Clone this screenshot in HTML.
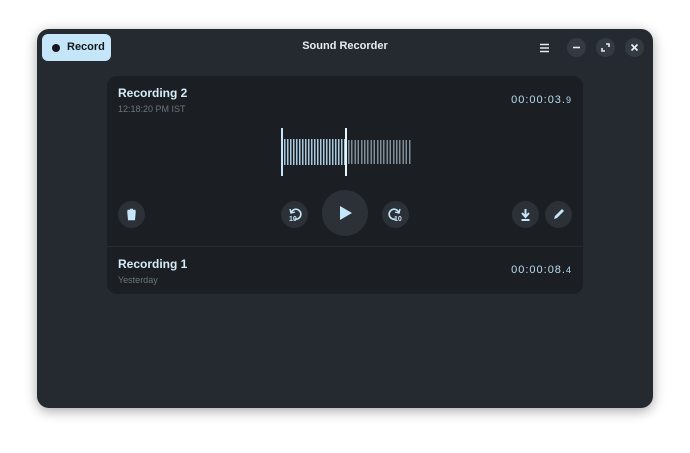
<!DOCTYPE html>
<html><head><style>
body{margin:0;width:690px;height:453px;background:#fff;position:relative;overflow:hidden;font-family:"Liberation Sans",sans-serif}
.win{position:absolute;left:37px;top:29px;width:616px;height:379px;background:#242a30;border-radius:12px;box-shadow:0 3px 12px rgba(0,0,0,.35)}
.rec{position:absolute;left:5px;top:5px;width:69px;height:27px;background:#c4e6f8;border-radius:6px;color:#15191d;font-weight:bold;font-size:11px;line-height:27px}
.rec i{position:absolute;left:10px;top:10px;width:8px;height:8px;border-radius:50%;background:#15191d}
.rec span{position:absolute;left:25px}
.title{position:absolute;left:0;width:616px;top:11px;text-align:center;color:#e6ecf0;font-weight:bold;font-size:11px}
.cb{position:absolute;top:9px;width:19px;height:19px;border-radius:50%;background:#333a41}
.card{position:absolute;left:70px;top:47px;width:476px;height:218px;background:#1b1f23;border-radius:10px}
.n{position:absolute;color:#d5ecf8;font-weight:bold;font-size:12px}
.s{position:absolute;color:#6b757d;font-size:9px}
.t{position:absolute;right:11px;color:#b9dbee;font-size:11px;letter-spacing:1px}
.t small{font-size:9px}
.btn{position:absolute;width:27px;height:27px;border-radius:50%;background:#2b3137}
.btn svg{position:absolute;left:0;top:0}
</style></head><body>
<div class="win">
<div class="rec"><i></i><span>Record</span></div>
<div class="title">Sound Recorder</div>
<svg style="position:absolute;left:503px;top:14px" width="10" height="10"><path d="M0 1.5h9M0 5h9M0 8.5h9" stroke="#e6ecf0" stroke-width="1.6"/></svg>
<div class="cb" style="left:530px"><svg width="19" height="19"><path d="M6 9.5h7" stroke="#e6ecf0" stroke-width="1.6"/></svg></div>
<div class="cb" style="left:559px"><svg width="19" height="19"><path d="M10 6h3v3M9 13H6v-3" stroke="#e6ecf0" stroke-width="1.6" fill="none"/></svg></div>
<div class="cb" style="left:588px"><svg width="19" height="19"><path d="M6.5 6.5l6 6M12.5 6.5l-6 6" stroke="#e6ecf0" stroke-width="1.8"/></svg></div>
<div class="card">
<div class="n" style="left:11px;top:10px">Recording 2</div>
<div class="s" style="left:11px;top:28px">12:18:20 PM IST</div>
<div class="t" style="top:18px">00:00:03.<small>9</small></div>
<div style="position:absolute;left:174px;top:52px;width:1.5px;height:48px;background:#c4e6f8"></div>
<div style="position:absolute;left:177px;top:63px;width:61px;height:26px;background:repeating-linear-gradient(90deg,#a9c8dc 0 1.5px,transparent 1.5px 3px)"></div>
<div style="position:absolute;left:238px;top:52px;width:2px;height:48px;background:#e6f4fc"></div>
<div style="position:absolute;left:241px;top:64px;width:64px;height:24px;background:repeating-linear-gradient(90deg,#7e8d97 0 1.5px,transparent 1.5px 3.2px)"></div>
<div class="btn" style="left:11px;top:125px"><svg width="27" height="27"><path d="M10 11h7l-.7 7.5h-5.6zM9.5 9.5h8M12 8.5h3" stroke="#c4e6f8" stroke-width="1.5" fill="#c4e6f8"/></svg></div>
<div class="btn" style="left:174px;top:125px"><svg width="27" height="27"><path d="M10 12a5 5 0 1 1 3.5 6" stroke="#c4e6f8" stroke-width="1.6" fill="none"/><path d="M9 8l1 4 4-1" stroke="#c4e6f8" stroke-width="1.4" fill="none"/><text x="8" y="20" font-size="7" font-weight="bold" fill="#c4e6f8" font-family="Liberation Sans">10</text></svg></div>
<div style="position:absolute;left:215px;top:114px;width:46px;height:46px;border-radius:50%;background:#2b3137"><svg width="46" height="46"><path d="M18 16v14l12-7z" fill="#c4e6f8"/></svg></div>
<div class="btn" style="left:275px;top:125px"><svg width="27" height="27"><path d="M17 12a5 5 0 1 0-3.5 6" stroke="#c4e6f8" stroke-width="1.6" fill="none"/><path d="M18 8l-1 4-4-1" stroke="#c4e6f8" stroke-width="1.4" fill="none"/><text x="12" y="20" font-size="7" font-weight="bold" fill="#c4e6f8" font-family="Liberation Sans">10</text></svg></div>
<div class="btn" style="left:405px;top:125px"><svg width="27" height="27"><path d="M13.5 8v7M10 12l3.5 4 3.5-4M9.5 19h8" stroke="#c4e6f8" stroke-width="2" fill="none"/></svg></div>
<div class="btn" style="left:438px;top:125px"><svg width="27" height="27"><path d="M9 18l1-3 7-7 2 2-7 7z" fill="#c4e6f8"/></svg></div>
<div style="position:absolute;left:0;top:170px;width:476px;height:1px;background:#262c32"></div>
<div class="n" style="left:11px;top:181px">Recording 1</div>
<div class="s" style="left:11px;top:199px">Yesterday</div>
<div class="t" style="top:188px">00:00:08.<small>4</small></div>
</div>
</div>
</body></html>
